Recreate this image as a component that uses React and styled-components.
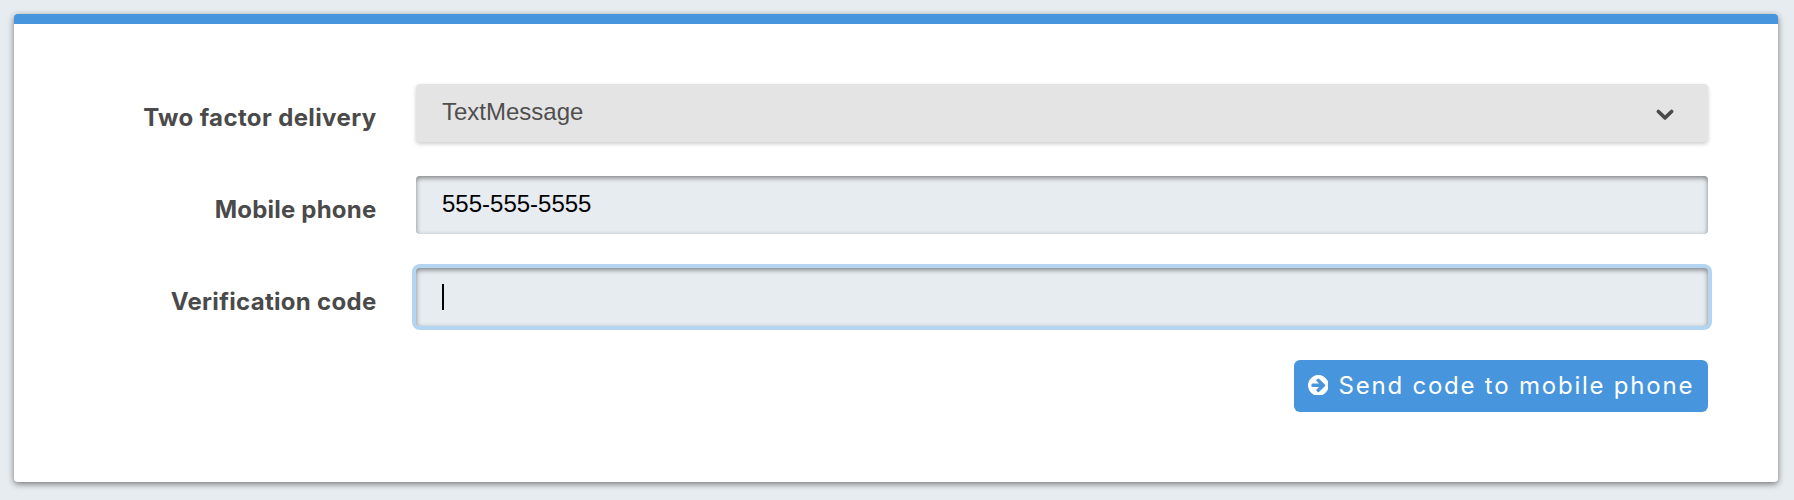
import React from "react";
import styled, { createGlobalStyle, css } from "styled-components";

const GlobalStyle = createGlobalStyle`
  *, *::before, *::after { box-sizing: border-box; }
  body {
    margin: 0;
    background: #e7ecf0;
    color: #4a4a4a;
    font-family: Inter, "Liberation Sans", sans-serif;
  }
`;

const Page = styled.main`
  height: 500px;
  padding: 14px 16px 18px 14px;
`;

const Card = styled.form`
  height: 468px;
  padding: 60px 70px 0 0;
  background: #fff;
  border-top: 10px solid #4795dc;
  border-radius: 4px;
  box-shadow: 0 2px 6px rgba(0, 0, 0, 0.5);
`;

const Fields = styled.div`
  display: flex;
  flex-direction: column;
  gap: 34px;
`;

const Field = styled.div`
  display: grid;
  grid-template-columns: 362.5px 1fr;
  column-gap: 39.5px;
  height: 58px;
`;

const Label = styled.label`
  padding-top: 19px;
  text-align: right;
  font-size: 24px;
  font-weight: 700;
  line-height: 29px;
  letter-spacing: ${(p) => p.$tracking}px;
  white-space: nowrap;
`;

const control = css`
  display: flex;
  align-items: center;
  height: 58px;
  padding: 0 26px;
  border-radius: 4px;
  font-family: "Liberation Sans", Arial, sans-serif;
  font-size: 24px;
  line-height: 28px;
`;

const Select = styled.div`
  ${control}
  justify-content: space-between;
  padding: 0 34px 2px 26px;
  background: #e4e4e4;
  color: #4f4f4f;
  box-shadow: 0 2px 4px rgba(0, 0, 0, 0.2);
`;

const Input = styled.div`
  ${control}
  padding-bottom: 2px;
  background: #e7ecf0;
  color: #000;
  box-shadow: inset 0 2px 5px rgba(0, 0, 0, 0.45)
    ${(p) => p.$focused && ", 0 0 0 4px #b4d5f1"};
`;

const Caret = styled.span`
  width: 2px;
  height: 26px;
  margin-top: 2px;
  background: #000;
`;

const Chevron = styled.svg`
  width: 18px;
  height: 12px;
  margin-top: 5px;
`;

const Actions = styled.div`
  display: flex;
  justify-content: flex-end;
  margin-top: 34px;
`;

const Button = styled.button`
  display: flex;
  align-items: center;
  gap: 10px;
  width: 414px;
  height: 52px;
  padding: 0 0 2px 13.8px;
  border: 0;
  border-radius: 6px;
  background: #4795dc;
  color: #fff;
  font: 400 24px/29px Inter, "Liberation Sans", sans-serif;
  letter-spacing: 1.78px;
  white-space: nowrap;
`;

const ArrowIcon = styled.svg`
  flex: none;
  width: 20.7px;
  height: 20.7px;
  fill: currentColor;
`;

export default function App() {
  return (
    <>
      <GlobalStyle />
      <Page>
        <Card>
          <Fields>
            <Field>
              <Label $tracking={0.38}>Two factor delivery</Label>
              <Select>
                <span>TextMessage</span>
                <Chevron viewBox="0 0 18 12" fill="none" stroke="#4a4a4a" strokeWidth="3.6" strokeLinecap="round" strokeLinejoin="round">
                  <path d="M2.4 2.5 9 8.9l6.6-6.4" />
                </Chevron>
              </Select>
            </Field>
            <Field>
              <Label $tracking={0.22}>Mobile phone</Label>
              <Input>555-555-5555</Input>
            </Field>
            <Field>
              <Label $tracking={0.3}>Verification code</Label>
              <Input $focused><Caret /></Input>
            </Field>
          </Fields>
          <Actions>
            <Button type="button">
              <ArrowIcon viewBox="128 128 1536 1536">
                <path d="M1413 896q0-27-18-45l-91-91-362-362q-18-18-45-18t-45 18l-91 91q-18 18-18 45t18 45l189 189h-502q-26 0-45 19t-19 45v128q0 26 19 45t45 19h502l-189 189q-19 19-19 45t19 45l91 91q18 18 45 18t45-18l362-362 91-91q18-18 18-45zm251 0q0 209-103 385.5t-279.5 279.5-385.5 103-385.5-103-279.5-279.5-103-385.5 103-385.5 279.5-279.5 385.5-103 385.5 103 279.5 279.5 103 385.5z" />
              </ArrowIcon>
              <span>Send code to mobile phone</span>
            </Button>
          </Actions>
        </Card>
      </Page>
    </>
  );
}
